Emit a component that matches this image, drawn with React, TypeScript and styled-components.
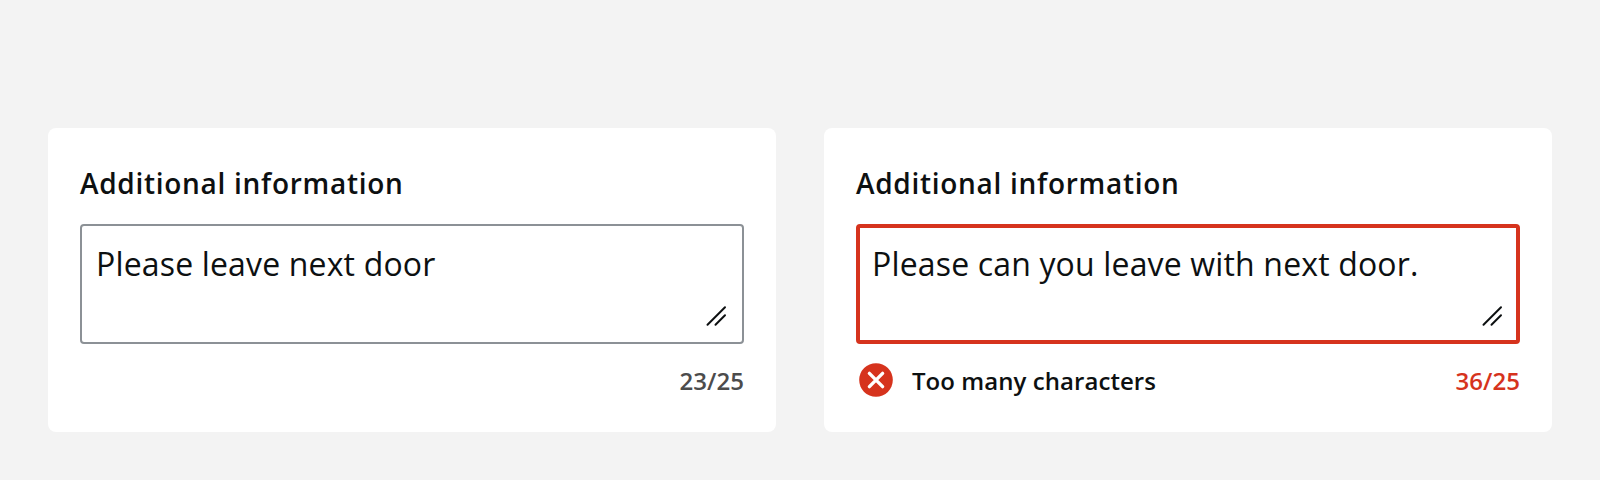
import React from 'react';
import styled, { createGlobalStyle } from 'styled-components';

const GlobalStyle = createGlobalStyle`
  *, *::before, *::after { box-sizing: border-box; }
  body { margin: 0; background: #f3f3f3; font-family: "Open Sans", sans-serif; color: #0d1011; }
`;

const Page = styled.main`
  display: grid;
  grid-template-columns: 728px 728px;
  gap: 48px;
  height: 480px;
  padding: 128px 48px 48px;
  background: #f3f3f3;
`;

const Card = styled.section`
  display: flex;
  flex-direction: column;
  padding: 31px 32px 32px;
  border-radius: 8px;
  background: #fff;
`;

const Label = styled.label`
  height: 48px;
  margin-bottom: 17px;
  font-size: 28px;
  line-height: 48px;
  font-weight: 600;
  letter-spacing: 0.71px;
  white-space: nowrap;
`;

const Field = styled.div<{ $invalid?: boolean }>`
  display: flex;
  justify-content: space-between;
  height: 120px;
  padding: ${p => (p.$invalid ? '12px' : '14px')};
  border: ${p => (p.$invalid ? '4px solid #d6331d' : '2px solid #8c9196')};
  border-radius: 4px;
`;

const Value = styled.span`
  font-size: 32px;
  line-height: 48px;
  letter-spacing: 0.16px;
  white-space: nowrap;
`;

const Grip = styled.svg`
  align-self: flex-end;
  flex: none;
`;

const Footer = styled.div`
  display: flex;
  align-items: center;
  height: 36px;
  margin-top: 18px;
  font-size: 24px;
  font-weight: 600;
  line-height: 36px;
  letter-spacing: 0.06px;
`;

const ErrorIcon = styled.svg`
  flex: none;
  margin: 0 17px 0 1px;
`;

const Message = styled.span`
  padding-top: 2px;
  white-space: nowrap;
`;

const Counter = styled.span<{ $invalid?: boolean }>`
  margin-left: auto;
  padding-top: 2px;
  color: ${p => (p.$invalid ? '#d6331d' : '#4c4c4c')};
`;

type Props = { value: string; count: string; error?: string };

function TextField({ value, count, error }: Props) {
  return (
    <Card>
      <Label>Additional information</Label>
      <Field $invalid={!!error}>
        <Value>{value}</Value>
        <Grip width="24" height="24" viewBox="0 0 24 24" fill="none" stroke="#0d1011" strokeWidth="2" strokeLinecap="round">
          <path d="M3.5 20.7 21 3.3M11.5 20.7l9.5-9.4" />
        </Grip>
      </Field>
      <Footer>
        {error && (
          <>
            <ErrorIcon width="38" height="38" viewBox="0 0 38 38">
              <circle cx="19" cy="19" r="16.8" fill="#d6331d" />
              <path d="m12.4 12.4 13.2 13.2M25.6 12.4 12.4 25.6" stroke="#fff" strokeWidth="3.4" strokeLinecap="round" />
            </ErrorIcon>
            <Message>{error}</Message>
          </>
        )}
        <Counter $invalid={!!error}>{count}</Counter>
      </Footer>
    </Card>
  );
}

export default function App() {
  return (
    <>
      <GlobalStyle />
      <Page>
        <TextField value="Please leave next door" count="23/25" />
        <TextField value="Please can you leave with next door." count="36/25" error="Too many characters" />
      </Page>
    </>
  );
}
